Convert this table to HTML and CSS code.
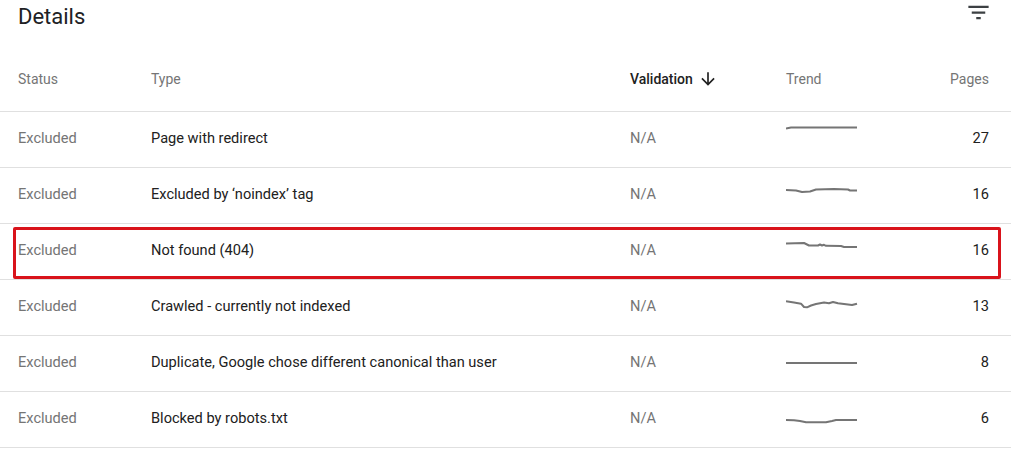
FILE: index.html
```html
<!DOCTYPE html>
<html lang="en">
<head>
<meta charset="utf-8">
<title>Details</title>
<link rel="stylesheet" href="styles.css">
</head>
<body>
<div class="card">
  <div class="topbar">
    <h1 class="title">Details</h1>
    <svg class="filter-icon" viewBox="0 0 24 24" width="27" height="27" aria-hidden="true"><path d="M10 18h4v-2h-4v2zM3 6v2h18V6H3zm3 7h12v-2H6v2z"/></svg>
  </div>
  <div class="row head">
    <div class="cell muted">Status</div>
    <div class="cell muted">Type</div>
    <div class="cell sort">Validation<svg class="arrow" viewBox="0 0 24 24" width="20" height="20" aria-hidden="true"><path d="M20 12l-1.41-1.41L13 16.17V4h-2v12.17l-5.58-5.59L4 12l8 8 8-8z"/></svg></div>
    <div class="cell muted">Trend</div>
    <div class="cell muted num">Pages</div>
  </div>

  <div class="row body">
    <div class="cell muted">Excluded</div>
    <div class="cell">Page with redirect</div>
    <div class="cell muted">N/A</div>
    <div class="cell"><svg class="spark" viewBox="0 0 72 30" width="72" height="30"><path d="M0 4.5 L5 3.5 L71 3.5"/></svg></div>
    <div class="cell num">27</div>
  </div>

  <div class="row body">
    <div class="cell muted">Excluded</div>
    <div class="cell">Excluded by ‘noindex’ tag</div>
    <div class="cell muted">N/A</div>
    <div class="cell"><svg class="spark" viewBox="0 0 72 30" width="72" height="30"><path d="M0 10 L10 10.5 L16 12 L24 11.5 L30 9.5 L48 9 L62 9.5 L64 10.5 L71 10.5"/></svg></div>
    <div class="cell num">16</div>
  </div>

  <div class="row body">
    <div class="cell muted">Excluded</div>
    <div class="cell">Not found (404)</div>
    <div class="cell muted">N/A</div>
    <div class="cell"><svg class="spark" viewBox="0 0 72 30" width="72" height="30"><path d="M0 7.5 L18 7 L23 9.5 L32 9.5 L34 8.5 L36 9.5 L38 8.8 L40 9.8 L55 10 L58 11 L71 11"/></svg></div>
    <div class="cell num">16</div>
    <div class="highlight"></div>
  </div>

  <div class="row body">
    <div class="cell muted">Excluded</div>
    <div class="cell">Crawled - currently not indexed</div>
    <div class="cell muted">N/A</div>
    <div class="cell"><svg class="spark" viewBox="0 0 72 30" width="72" height="30"><path d="M0 9.3 L8 10.5 L15 11.7 L18 15 L21 15.3 L25 13.5 L30 12 L38 10.5 L43 11.3 L47 10 L52 11.2 L60 12.3 L66 13 L71 11.7"/></svg></div>
    <div class="cell num">13</div>
  </div>

  <div class="row body">
    <div class="cell muted">Excluded</div>
    <div class="cell">Duplicate, Google chose different canonical than user</div>
    <div class="cell muted">N/A</div>
    <div class="cell"><svg class="spark" viewBox="0 0 72 30" width="72" height="30"><path d="M0 15 L71 15"/></svg></div>
    <div class="cell num">8</div>
  </div>

  <div class="row body">
    <div class="cell muted">Excluded</div>
    <div class="cell">Blocked by robots.txt</div>
    <div class="cell muted">N/A</div>
    <div class="cell"><svg class="spark" viewBox="0 0 72 30" width="72" height="30"><path d="M0 16 L8 16.2 L14 17 L20 18.3 L40 18.3 L46 17 L50 16 L71 16"/></svg></div>
    <div class="cell num">6</div>
  </div>
</div>
</body>
</html>
```

FILE: styles.css
```css
* { box-sizing: border-box; }

html, body {
  margin: 0;
  padding: 0;
  background: #ffffff;
}

body {
  font-family: Roboto, "Liberation Sans", Arial, sans-serif;
  font-size: 14px;
  color: #212121;
  width: 1011px;
  overflow: hidden;
}

.card {
  width: 1011px;
}

.topbar {
  height: 56px;
  display: flex;
  justify-content: space-between;
  align-items: flex-start;
  padding: 0 22px 0 18px;
}

.title {
  margin: 0;
  font-size: 22px;
  font-weight: 400;
  line-height: 34px;
  color: #202124;
}

.filter-icon {
  fill: #3c4043;
  margin-right: -3px;
  margin-top: -1px;
}

.row {
  position: relative;
  display: grid;
  grid-template-columns: 133px 479px 156px 100px 1fr;
  align-items: center;
  height: 56px;
  padding: 0 22px 4px 18px;
  border-bottom: 1px solid #e0e0e0;
}

.row.head {
  padding-bottom: 9px;
}

.row.body {
  font-size: 14.6px;
  padding-bottom: 3px;
}

.cell {
  line-height: 20px;
  white-space: nowrap;
  display: flex;
  align-items: center;
}

.muted {
  color: #757575;
}

.num {
  justify-content: flex-end;
}

.sort {
  font-weight: 500;
  color: #212121;
}

.arrow {
  fill: #212121;
  margin-left: 5px;
}

.spark {
  display: block;
  margin-top: 2px;
}

.spark path {
  fill: none;
  stroke: #757575;
  stroke-width: 2;
  stroke-linejoin: round;
}

.highlight {
  position: absolute;
  left: 13px;
  top: 3px;
  width: 988px;
  height: 52px;
  border: 3px solid #d9131b;
  border-radius: 2px;
  pointer-events: none;
}
```
